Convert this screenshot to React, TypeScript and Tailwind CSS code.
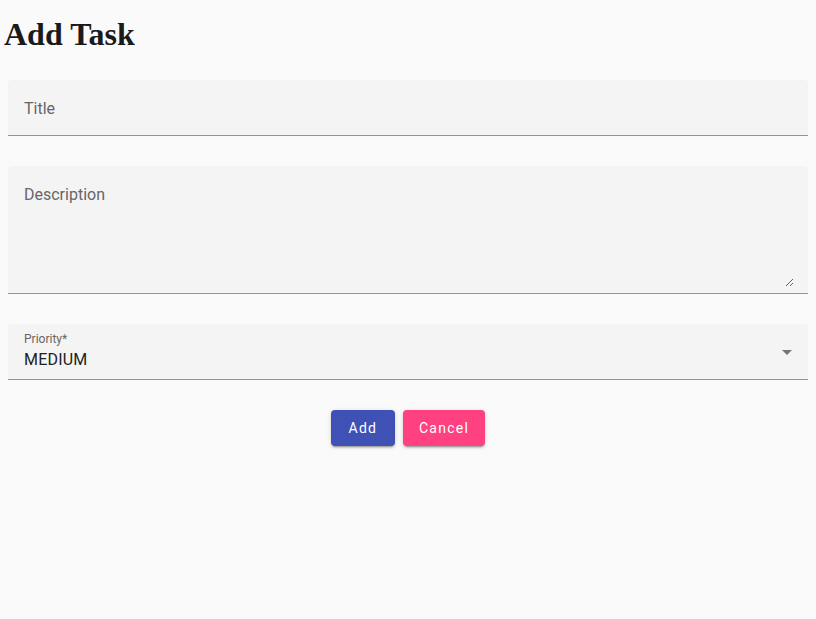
import React from 'react';

const fieldBox = 'bg-[#f4f4f4] rounded-t-[4px] border-b border-[#949494]';
const btn =
  'h-9 min-w-[64px] px-4 rounded-[4px] text-white text-sm font-normal tracking-[1.25px] shadow-[0_3px_1px_-2px_rgba(0,0,0,0.2),0_2px_2px_0_rgba(0,0,0,0.14),0_1px_5px_0_rgba(0,0,0,0.12)]';

const App: React.FC = () => {
  return (
    <div className="min-h-[619px] bg-[#fafafa] font-['Roboto',sans-serif] text-[#212121]">
      <h1 className="pl-1 pt-4 text-[32px] leading-[37px] font-bold font-['Liberation_Serif',serif] text-[#1a1a1a]">
        Add Task
      </h1>

      <form className="mx-2 mt-[27px] flex flex-col" onSubmit={e => e.preventDefault()}>
        {/* Title */}
        <div className={`${fieldBox} h-[56px] px-4 flex items-center`}>
          <input
            className="w-full bg-transparent outline-none text-base leading-[23px] placeholder:text-[#666] pt-[1px]"
            placeholder="Title"
          />
        </div>

        {/* Description */}
        <div className={`${fieldBox} mt-[30px] pl-4 pr-[14px] pt-[17px] pb-[6px]`}>
          <textarea
            className="block w-full h-[104px] bg-transparent outline-none text-base leading-[23px] resize-y placeholder:text-[#666]"
            placeholder="Description"
          />
        </div>

        {/* Priority */}
        <div className={`${fieldBox} mt-[30px] h-[56px] px-4 pt-[8px] relative flex flex-col`}>
          <span className="text-xs leading-[14px] text-[#666]">Priority*</span>
          <span className="mt-[2px] text-base leading-[23px] tracking-[0.2px]">MEDIUM</span>
          <svg
            className="absolute right-[9px] top-1/2 -translate-y-1/2 w-6 h-6 fill-[#757575]"
            viewBox="0 0 24 24"
          >
            <path d="M7 10l5 5 5-5z" />
          </svg>
        </div>

        <div className="mt-[30px] flex justify-center gap-2">
          <button type="submit" className={`${btn} bg-[#3f51b5]`}>
            Add
          </button>
          <button type="button" className={`${btn} bg-[#ff4081]`}>
            Cancel
          </button>
        </div>
      </form>
    </div>
  );
};

export default App;
